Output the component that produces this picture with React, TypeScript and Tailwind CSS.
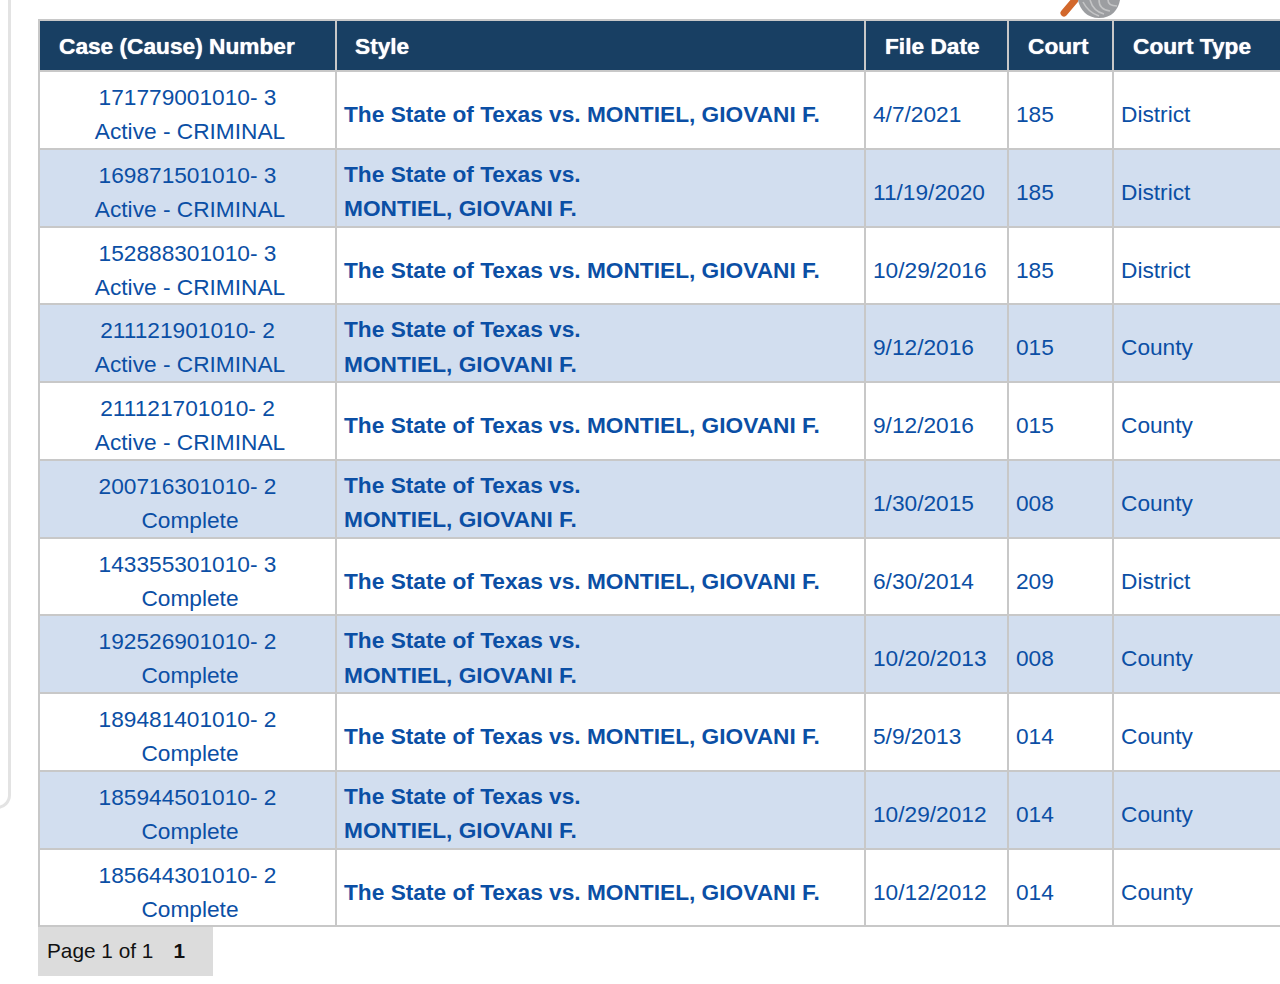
const rows = [
  ["171779001010- 3", "Active - CRIMINAL", false, "4/7/2021", "185", "District"],
  ["169871501010- 3", "Active - CRIMINAL", true, "11/19/2020", "185", "District"],
  ["152888301010- 3", "Active - CRIMINAL", false, "10/29/2016", "185", "District"],
  ["211121901010- 2", "Active - CRIMINAL", true, "9/12/2016", "015", "County"],
  ["211121701010- 2", "Active - CRIMINAL", false, "9/12/2016", "015", "County"],
  ["200716301010- 2", "Complete", true, "1/30/2015", "008", "County"],
  ["143355301010- 3", "Complete", false, "6/30/2014", "209", "District"],
  ["192526901010- 2", "Complete", true, "10/20/2013", "008", "County"],
  ["189481401010- 2", "Complete", false, "5/9/2013", "014", "County"],
  ["185944501010- 2", "Complete", true, "10/29/2012", "014", "County"],
  ["185644301010- 2", "Complete", false, "10/12/2012", "014", "County"],
] as const;

function Glass() {
  return (
    <svg className="absolute left-[1058px] top-0" width="64" height="19" viewBox="0 0 64 19">
      <path d="M6 13 L17 0" stroke="#d2682c" strokeWidth="7" strokeLinecap="round" />
      <path d="M20 0 H62 C60 10 54 18 41 18 C29 18 22 10 20 0 Z" fill="#9c9ea1" />
      <path d="M25 2 C29 10 35 14 41 16 M32 0 C34 7 38 12 46 14 M41 0 C41 6 44 10 52 11 M50 0 C50 4 53 6 59 6" stroke="#c4c5c6" strokeWidth="1.6" fill="none" />
    </svg>
  );
}

export default function App() {
  return (
    <div className="relative w-[1280px] h-[984px] overflow-hidden bg-white font-['Liberation_Sans',Arial,sans-serif]">
      <div className="absolute left-[-40px] top-[-20px] w-[51px] h-[829px] border-r-[3px] border-b-[3px] border-[#e3e3e3] rounded-br-[14px]" />
      <Glass />
      <div className="pl-[38px] pt-[19px]">
        <table className="table-fixed border-collapse w-[1300px] text-[22.7px] leading-[34px] text-[#0b4fa5]">
          <colgroup>
            <col className="w-[297px]" />
            <col className="w-[529px]" />
            <col className="w-[143px]" />
            <col className="w-[105px]" />
            <col />
          </colgroup>
          <thead>
            <tr className="h-[51px] bg-[#183f63] text-white font-bold text-left [text-shadow:0_0_1px_#ffffff]">
              <th className="border-2 border-[#c8c8c8] pl-[19px] font-bold">Case (Cause) Number</th>
              <th className="border-2 border-[#c8c8c8] pl-[18px] font-bold">Style</th>
              <th className="border-2 border-[#c8c8c8] pl-[19px] font-bold">File Date</th>
              <th className="border-2 border-[#c8c8c8] pl-[19px] font-bold">Court</th>
              <th className="border-2 border-[#c8c8c8] pl-[19px] font-bold">Court Type</th>
            </tr>
          </thead>
          <tbody>
            {rows.map((r) => (
              <tr key={r[0]} className={r[2] ? "h-[77.75px] bg-[#d2deef]" : "h-[77.75px] bg-white"}>
                <td className="border-2 border-[#c8c8c8] text-center align-top p-0 pt-[8px]">
                  <div className="-mb-[12px]">
                    <div>{r[0]}</div>
                    <div className="pl-[5px]">{r[1]}</div>
                  </div>
                </td>
                {r[2] ? (
                  <td className="border-2 border-[#c8c8c8] align-top font-bold p-0 pl-[7px] pt-[7px] leading-[34.5px]">
                    <div className="-mb-[12px]">
                      <div>The State of Texas vs.</div>
                      <div>MONTIEL, GIOVANI F.</div>
                    </div>
                  </td>
                ) : (
                  <td className="border-2 border-[#c8c8c8] align-top font-bold p-0 pl-[7px] pt-[25px]">
                    The State of Texas vs. MONTIEL, GIOVANI F.
                  </td>
                )}
                <td className="border-2 border-[#c8c8c8] align-top p-0 pl-[7px] pt-[25px]">{r[3]}</td>
                <td className="border-2 border-[#c8c8c8] align-top p-0 pl-[7px] pt-[25px]">{r[4]}</td>
                <td className="border-2 border-[#c8c8c8] align-top p-0 pl-[7px] pt-[25px]">{r[5]}</td>
              </tr>
            ))}
          </tbody>
        </table>
        <div className="w-[175px] h-[49px] bg-[#dcdcdc] flex items-center pl-[9px] pb-[3px] text-[20.8px] text-[#111]">
          <span>Page 1 of 1</span>
          <span className="ml-[20px] font-bold">1</span>
        </div>
      </div>
    </div>
  );
}
